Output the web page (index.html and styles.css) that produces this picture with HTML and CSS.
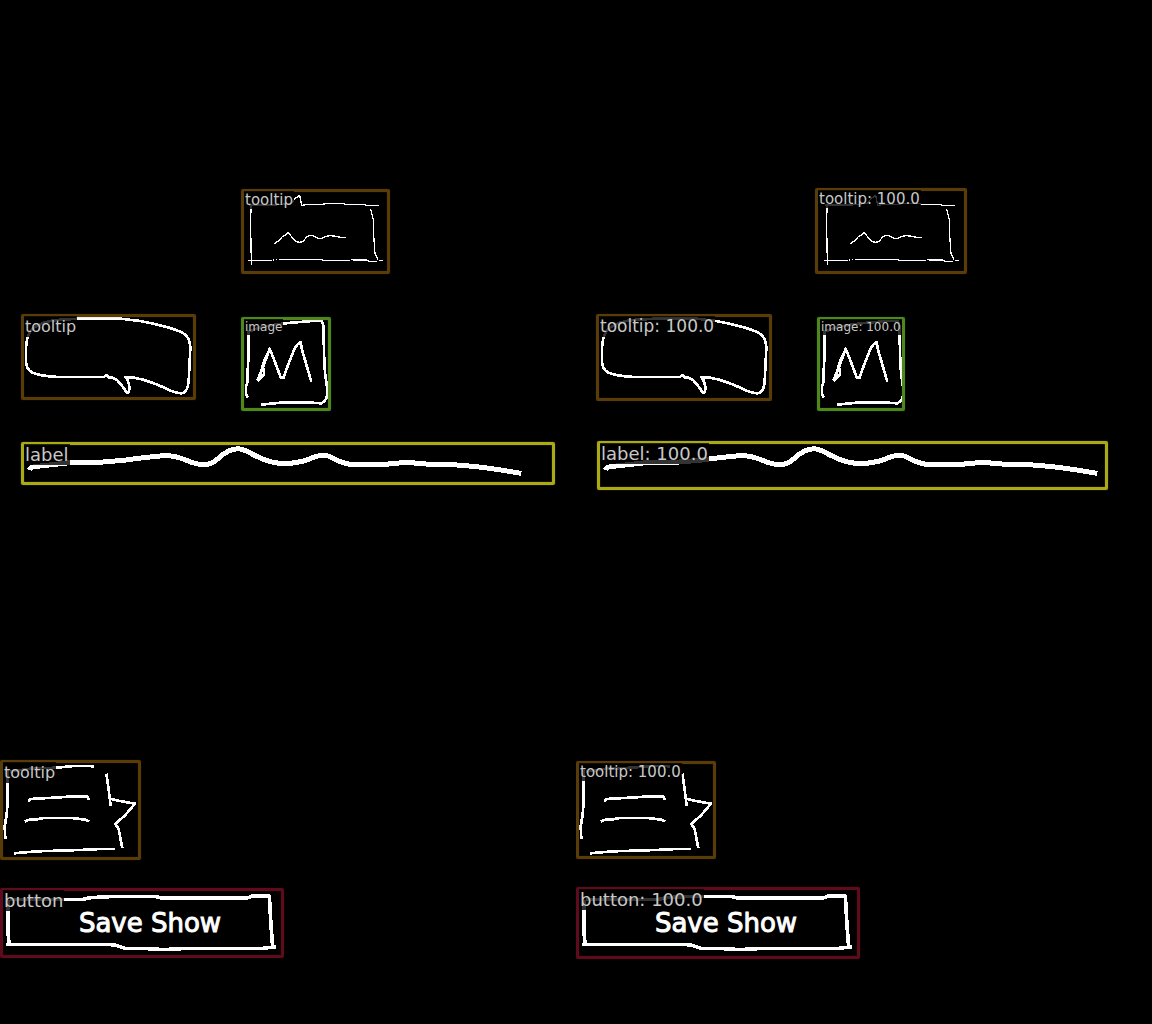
FILE: index.html
```html
<!DOCTYPE html>
<html lang="en">
<head>
<meta charset="utf-8">
<meta name="viewport" content="width=device-width, initial-scale=1">
<title>Detections</title>
<link rel="stylesheet" href="styles.css">
</head>
<body>
<main class="comparison">
  <section class="panel truth" aria-label="Annotated">
    <svg class="sketch" aria-hidden="true">
      <g id="strokes">
        <!-- popup with a small pointer on top -->
        <svg x="232" y="180" width="170" height="100" viewBox="0 0 510 300">
          <g class="thin">
            <path d="M57 78V95L55 120V155L57 180L58 254M48 241H120M123 238L126 241M131 241L134 238M141 239H270L274 241H353M358 238L364 240H405L410 244H436M441 241H453M50 75H130L178 70L190 55L203 46L209 76L232 73H273L280 71H320L334 71L340 73H398L402 76H440M416 87L424 120L425 165L429 222L438 238"/>
            <path d="M127 191L141 181L152 169L160 165L169 158L178 169L190 182Q201 192 215 182L225 170Q235 163 246 169Q262 180 275 173Q285 165 305 168L325 172L342 173"/>
          </g>
        </svg>
        <!-- speech bubble -->
        <svg x="10" y="305" width="200" height="105" viewBox="0 0 600 315">
          <path class="medium" d="M208 41H332L390 48Q500 69 526 89Q541 104 541 130L536 230Q532 265 514 265Q493 264 465 249Q394 216 347 216Q359 234 358 253Q357 264 351 264Q342 248 322 226Q307 216 294 216L291 210L281 216H145Q88 213 65 202Q47 190 48 165V130Q49 98 61 80Q82 52 140 45L208 41M290 212L299 220"/>
        </svg>
        <!-- framed picture -->
        <svg x="232" y="308" width="110" height="110" viewBox="0 0 330 330">
          <path class="medium" d="M50 65V140L47 188V220L42 236V258L48 269M46 72L90 56L158 46L205 42L263 37Q273 39 274 55L277 165L280 205L285 235V265Q280 281 267 286L238 284H145L88 290"/>
          <path class="medium" d="M76 218L94 175L113 122L132 170L148 213M96 180L96 200L80 217L97 157L107 136M153 213L166 177L187 123L197 109L206 102L210 125L226 180L238 221"/>
        </svg>
        <!-- long wavy line of text -->
        <svg x="10" y="435" width="280" height="60" viewBox="0 0 840 180">
          <path class="thick" d="M57 105Q60 96 80 94L180 83H255L340 76L400 68L460 62Q490 60 530 76Q592 104 625 70Q655 42 684 41Q700 42 730 59Q775 83 810 85H845"/>
        </svg>
        <svg x="280" y="435" width="290" height="60" viewBox="0 0 870 180">
          <path class="thick" d="M0 86Q35 87 75 77L105 65Q132 57 150 65Q190 88 215 88L250 90L315 88L380 82L450 88L518 89L590 95L650 103L724 115"/>
        </svg>
        <!-- popup pointing right -->
        <svg x="0" y="750" width="150" height="120" viewBox="0 0 450 360">
          <path class="medium" d="M23 60V160L19 200L14 230L16 268M30 65L90 56L170 53L222 48H278V54M85 155L92 147L180 142L215 139H262L267 150M75 215L90 208H110L130 204H215L257 209L267 215M41 310L110 304L240 300L300 297H346M319 71L325 110L332 168M331 146L360 153L405 161L375 196L346 222L356 237L367 295"/>
        </svg>
        <!-- button outline -->
        <svg x="0" y="880" width="300" height="85" viewBox="0 0 900 255">
          <path class="bold" d="M23 60V140L27 193M18 193H325L348 196L375 205H430L490 209L560 205H790L828 200M30 58H250L272 53L345 49H465L480 53H745L758 48H808L812 120L818 203"/>
        </svg>
      </g>
    </svg>
    <button class="sketched-button" type="button">Save Show</button>
    <div class="box tooltip top-tip"><span class="tag small">tooltip</span></div>
    <div class="box tooltip bubble"><span class="tag">tooltip</span></div>
    <div class="box image"><span class="tag tiny">image</span></div>
    <div class="box label"><span class="tag large">label</span></div>
    <div class="box tooltip side-tip"><span class="tag">tooltip</span></div>
    <div class="box button"><span class="tag large">button</span></div>
  </section>
  <section class="panel predicted" aria-label="Predicted">
    <svg class="sketch" aria-hidden="true"><use href="#strokes"/></svg>
    <button class="sketched-button" type="button">Save Show</button>
    <div class="box tooltip top-tip"><span class="tag small">tooltip: 100.0</span></div>
    <div class="box tooltip bubble"><span class="tag wide">tooltip: 100.0</span></div>
    <div class="box image"><span class="tag tiny">image: 100.0</span></div>
    <div class="box label"><span class="tag large">label: 100.0</span></div>
    <div class="box tooltip side-tip"><span class="tag small">tooltip: 100.0</span></div>
    <div class="box button"><span class="tag large">button: 100.0</span></div>
  </section>
</main>
</body>
</html>
```

FILE: styles.css
```css
* { box-sizing: border-box; }

body {
  margin: 0;
  background: #000;
  color: #c8c8c8;
  font-family: "DejaVu Sans", sans-serif;
}

.comparison {
  display: grid;
  grid-template-columns: 1fr 1fr;
  min-height: 100vh;
}

.panel {
  position: relative;
  overflow: hidden;
}

.sketch {
  position: absolute;
  inset: 0;
  width: 100%;
  height: 100%;
  fill: none;
  stroke: #fff;
  stroke-linejoin: round;
  shape-rendering: crispEdges;
}

.thin { stroke-width: 4px; }
.medium { stroke-width: 8px; }
.bold { stroke-width: 11px; }
.thick { stroke-width: 15px; }

/* Detection boxes, placed where the object lies on the canvas */
.box {
  position: absolute;
  border: 3px solid;
  border-radius: 2px;
  box-shadow: 0 0 1px currentColor, inset 0 0 1px currentColor;
}

.tooltip { color: #593c08; }
.image { color: #4f871d; }
.label { color: #acaa14; }
.button { color: #5e0c1c; }

.tag {
  position: absolute;
  top: -1px;
  left: 0;
  padding: 0 1px;
  background: rgb(0 0 0 / 80%);
  color: #c8c8c8;
  font-size: 16px;
  line-height: 21px;
  white-space: nowrap;
}

.tag.tiny { font-size: 12px; line-height: 16px; }
.tag.small { font-size: 15px; line-height: 18px; }
.tag.large { font-size: 18px; }

.truth .top-tip { left: 241px; top: 189px; width: 149px; height: 85px; }
.truth .bubble { left: 21px; top: 314px; width: 175px; height: 86px; }
.truth .image { left: 241px; top: 317px; width: 90px; height: 94px; }
.truth .label { left: 21px; top: 442px; width: 534px; height: 43px; }
.truth .side-tip { left: 0; top: 760px; width: 141px; height: 100px; }
.truth .button { left: 0; top: 888px; width: 284px; height: 70px; }

.predicted .top-tip { left: 239px; top: 188px; width: 152px; height: 86px; }
.predicted .bubble { left: 20px; top: 314px; width: 176px; height: 87px; }
.predicted .image { left: 241px; top: 317px; width: 88px; height: 94px; }
.predicted .label { left: 21px; top: 441px; width: 511px; height: 49px; }
.predicted .side-tip { left: 0; top: 761px; width: 140px; height: 98px; }
.predicted .button { left: 0; top: 887px; width: 284px; height: 72px; }

.tag.wide { font-size: 17px; }

.sketched-button {
  position: absolute;
  left: 8px;
  top: 896px;
  width: 264px;
  height: 54px;
  padding: 0 0 0 20px;
  border: 0;
  background: none;
  color: #fff;
  font: 26px "DejaVu Sans", sans-serif;
  -webkit-text-stroke: 1px #fff;
}
```
